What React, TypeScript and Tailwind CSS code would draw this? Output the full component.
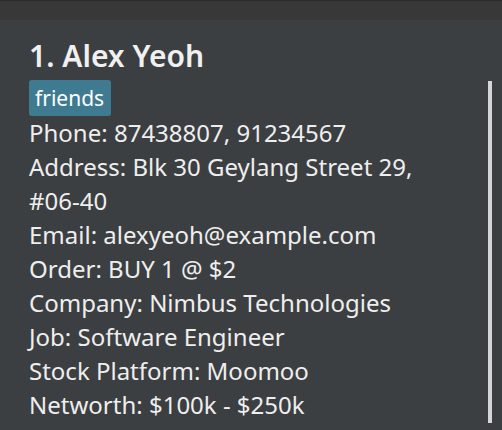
import React from "react";

type Field = { label: string; value: string };

const fields: Field[] = [
  { label: "Phone", value: "87438807, 91234567" },
  { label: "Address", value: "Blk 30 Geylang Street 29, #06-40" },
  { label: "Email", value: "alexyeoh@example.com" },
  { label: "Order", value: "BUY 1 @ $2" },
  { label: "Company", value: "Nimbus Technologies" },
  { label: "Job", value: "Software Engineer" },
  { label: "Stock Platform", value: "Moomoo" },
  { label: "Networth", value: "$100k - $250k" },
];

const PersonCard = () => {
  return (
    <div className="relative flex-1 bg-[#3c3f41] pl-[29px] pt-[16px]">
      <h1 className="text-[30px] leading-[40px] font-semibold text-[#f0f0f0]">
        1. Alex Yeoh
      </h1>
      <div className="mt-[4px] flex">
        <span className="h-[36px] rounded-[3px] bg-[#3e7b91] pl-[6px] pr-[7px] text-[21px] leading-[36px] text-white">
          friends
        </span>
      </div>
      <div className="w-[440px] text-[24px] leading-[34px] text-[#eeeeee]">
        {fields.map((f) => (
          <p key={f.label}>
            {f.label}: {f.value}
          </p>
        ))}
      </div>
      <div className="absolute right-[10px] top-[61px] h-[342px] w-[4px] bg-[#d6d6d6]" />
    </div>
  );
};

const App = () => {
  return (
    <div
      className="flex h-[430px] w-[502px] flex-col overflow-hidden"
      style={{ fontFamily: '"Noto Sans", "Open Sans", sans-serif' }}
    >
      <div className="h-[20px] border-t border-[#2b2b2b] bg-[#383838]" />
      <PersonCard />
    </div>
  );
};

export default App;
